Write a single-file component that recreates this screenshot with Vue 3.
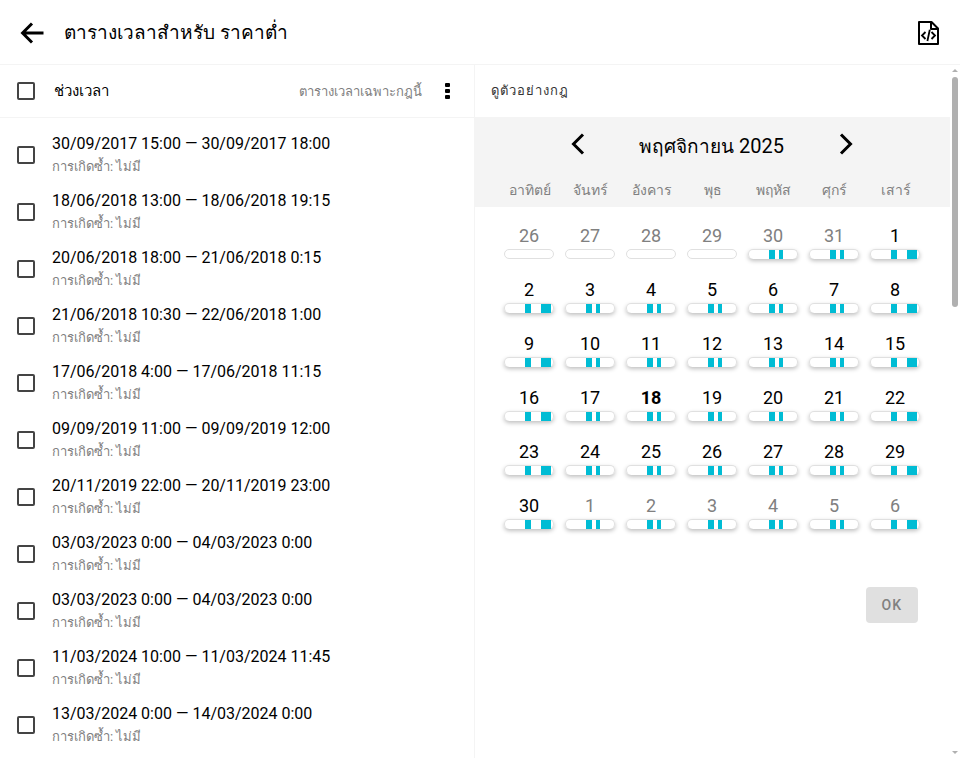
<template>
  <div class="page">
    <header class="top-bar">
      <button class="icon-button" aria-label="กลับ">
        <svg width="24" height="24" viewBox="0 0 24 24">
          <path d="M12 2.5 L2.6 12 L12 21.5 M3 12 H23.5" fill="none" stroke="#000" stroke-width="3" />
        </svg>
      </button>
      <h1>ตารางเวลาสำหรับ ราคาต่ำ</h1>
      <button class="icon-button" aria-label="JSON">
        <svg width="24" height="26" viewBox="0 0 24 26">
          <path d="M3 2 H15.5 L22 8.5 V24 H3 Z M15 2 V9 H22" fill="none" stroke="#000" stroke-width="2" stroke-linejoin="round" />
          <path d="M9.5 12 L6 15.5 L9.5 19 M15.5 12 L19 15.5 L15.5 19 M13.8 9.8 L11.4 21" fill="none" stroke="#000" stroke-width="1.8" />
        </svg>
      </button>
    </header>

    <main class="content">
      <section class="periods">
        <div class="list-header">
          <input id="select-all" v-model="allSelected" type="checkbox" />
          <label for="select-all">ช่วงเวลา</label>
          <span class="rule-note">ตารางเวลาเฉพาะกฎนี้</span>
          <button class="icon-button more" aria-label="เมนู">
            <svg width="6" height="18" viewBox="0 0 6 18">
              <rect x="1" y="1" width="5" height="4" rx="1" />
              <rect x="1" y="7" width="5" height="4" rx="1" />
              <rect x="1" y="13" width="5" height="4" rx="1" />
            </svg>
          </button>
        </div>
        <ul class="list">
          <li v-for="(period, index) in periods" :key="index">
            <input :id="'period-' + index" v-model="selected" type="checkbox" :value="index" />
            <label :for="'period-' + index">
              <span class="range">{{ period }}</span>
              <span class="repeat">การเกิดซ้ำ: ไม่มี</span>
            </label>
          </li>
        </ul>
      </section>

      <section class="preview">
        <h2>ดูตัวอย่างกฎ</h2>
        <div class="calendar-head">
          <div class="month">
            <button class="icon-button" aria-label="เดือนก่อน">
              <svg width="16" height="24" viewBox="0 0 16 24">
                <path d="M13 1.5 L3.5 11 L13 20.5" fill="none" stroke="#000" stroke-width="3" />
              </svg>
            </button>
            <span class="month-name"><span class="thai">พฤศจิกายน</span> 2025</span>
            <button class="icon-button" aria-label="เดือนถัดไป">
              <svg width="16" height="24" viewBox="0 0 16 24">
                <path d="M3 1.5 L12.5 11 L3 20.5" fill="none" stroke="#000" stroke-width="3" />
              </svg>
            </button>
          </div>
          <div class="week weekdays">
            <span v-for="name in weekdays" :key="name">{{ name }}</span>
          </div>
        </div>
        <div class="week days">
          <button
            v-for="(day, index) in days"
            :key="index"
            :class="['day', { other: day.other, today: day.today }]"
          >
            {{ day.number }}
            <span :class="['hours', { filled: day.slots.length }]">
              <span
                v-for="slot in day.slots"
                :key="slot[0]"
                class="slot"
                :style="{ left: percent(slot[0]), width: percent(slot[1] - slot[0]) }"
              ></span>
            </span>
          </button>
        </div>
        <div class="actions">
          <button class="ok" disabled>OK</button>
        </div>
      </section>

      <div class="scrollbar" aria-hidden="true">
        <span class="arrow up"></span>
        <span class="thumb"></span>
        <span class="arrow down"></span>
      </div>
    </main>
  </div>
</template>

<script setup>
import { ref, computed } from 'vue';

const periods = [
  '30/09/2017 15:00 — 30/09/2017 18:00',
  '18/06/2018 13:00 — 18/06/2018 19:15',
  '20/06/2018 18:00 — 21/06/2018 0:15',
  '21/06/2018 10:30 — 22/06/2018 1:00',
  '17/06/2018 4:00 — 17/06/2018 11:15',
  '09/09/2019 11:00 — 09/09/2019 12:00',
  '20/11/2019 22:00 — 20/11/2019 23:00',
  '03/03/2023 0:00 — 04/03/2023 0:00',
  '03/03/2023 0:00 — 04/03/2023 0:00',
  '11/03/2024 10:00 — 11/03/2024 11:45',
  '13/03/2024 0:00 — 14/03/2024 0:00'
];
const weekdays = ['อาทิตย์', 'จันทร์', 'อังคาร', 'พุธ', 'พฤหัส', 'ศุกร์', 'เสาร์'];

const selected = ref([]);
const allSelected = computed({
  get: () => selected.value.length === periods.length,
  set: value => {
    selected.value = value ? periods.map((_, i) => i) : [];
  }
});

// hours of the day, [from, to]
const weekdaySlots = [[10, 13], [15, 17]];
const weekendSlots = [[10, 13], [18, 23]];

const getSlots = (index) => {
  if (index < 4) return [];
  return index % 7 === 0 || index % 7 === 6 ? weekendSlots : weekdaySlots;
};

const numbers = [
  26, 27, 28, 29, 30, 31,
  ...Array.from({ length: 30 }, (_, i) => i + 1),
  1, 2, 3, 4, 5, 6
];
const days = numbers.map((number, index) => ({
  number,
  other: index < 6 || index > 35,
  today: index === 23,
  slots: getSlots(index)
}));

const percent = (hours) => `${(hours / 24) * 100}%`;
</script>

<style>
body {
  margin: 0;
}
</style>

<style scoped>
.page {
  display: flex;
  flex-direction: column;
  min-height: 100vh;
  background: #fff;
  color: #000;
  font-family: Roboto, sans-serif;
  font-size: 16px;
}

button {
  padding: 0;
  border: none;
  background: none;
  color: inherit;
  font-family: inherit;
  cursor: pointer;
}

.icon-button {
  display: flex;
}

.top-bar {
  display: flex;
  align-items: center;
  gap: 20px;
  height: 62px;
  padding: 2px 20px 0;
  border-bottom: 1px solid #f4f4f4;
}

h1 {
  flex: 1;
  margin: 0;
  padding-bottom: 2px;
  font-size: 19px;
  font-weight: 400;
}

.content {
  flex: 1;
  display: grid;
  grid-template-columns: 1fr 1fr 10px;
}

.periods {
  border-right: 1px solid #f4f4f4;
}

.list-header {
  display: flex;
  align-items: center;
  height: 52px;
  padding: 0 24px 0 17px;
  border-bottom: 1px solid #f4f4f4;
}

.list-header label {
  flex: 1;
  margin-left: 19px;
  font-size: 15px;
}

input[type='checkbox'] {
  appearance: none;
  flex: none;
  width: 18px;
  height: 18px;
  margin: 0;
  border: 2px solid #444;
  border-radius: 2px;
}

input[type='checkbox']:checked {
  background: #00bcd4;
}

.rule-note {
  margin-right: 22px;
  color: #808080;
  font-size: 13px;
}

.list {
  margin: 0;
  padding: 8px 0 0;
  list-style: none;
}

.list li {
  display: flex;
  align-items: center;
  height: 57px;
  padding-left: 17px;
}

.list label {
  display: flex;
  flex-direction: column;
  margin-left: 17px;
}

.range {
  line-height: 24px;
}

.repeat {
  color: #808080;
  font-size: 13px;
  line-height: 22px;
}

h2 {
  margin: 0;
  padding: 0 16px;
  color: #333;
  font-size: 13px;
  font-weight: 400;
  letter-spacing: 1px;
  line-height: 52px;
}

.calendar-head {
  height: 90px;
  background: #f4f4f4;
}

.month {
  display: flex;
  align-items: center;
  justify-content: center;
  gap: 24px;
  height: 56px;
  padding-right: 2px;
}

.month-name {
  width: 204px;
  padding-top: 2px;
  font-size: 20px;
  text-align: center;
}

.thai {
  font-size: 19px;
}

.week {
  display: grid;
  grid-template-columns: repeat(7, 61px);
  justify-content: center;
  text-align: center;
}

.weekdays {
  color: #808080;
  font-size: 14px;
  line-height: 34px;
}

.days {
  padding-top: 16px;
  padding-right: 1px;
}

.day {
  display: flex;
  flex-direction: column;
  align-items: center;
  height: 54px;
  font-size: 18px;
  line-height: 26px;
}

.other {
  color: #808080;
}

.today {
  font-weight: 700;
}

.hours {
  position: relative;
  box-sizing: border-box;
  width: 50px;
  height: 10px;
  border: 1px solid #e0e0e0;
  border-radius: 5px;
}

.filled {
  border-bottom: none;
  box-shadow: 0 2px 4px rgba(0, 0, 0, 0.25);
}

.slot {
  position: absolute;
  top: 0;
  bottom: 0;
  background: #00bcd4;
}

.actions {
  display: flex;
  justify-content: flex-end;
  padding: 40px 32px;
}

.ok {
  height: 36px;
  padding: 0 16px;
  border-radius: 4px;
  background: #e0e0e0;
  color: #808080;
  font-size: 14px;
  font-weight: 500;
  letter-spacing: 1px;
}

.scrollbar {
  display: flex;
  flex-direction: column;
  align-items: center;
  padding: 4px 0;
}

.thumb {
  width: 6px;
  height: 230px;
  margin-top: 5px;
  border-radius: 3px;
  background: #b0b0b0;
}

.arrow {
  border: 3px solid transparent;
}

.up {
  border-top: none;
  border-bottom-color: #b0b0b0;
}

.down {
  margin-top: auto;
  border-bottom: none;
  border-top-color: #b0b0b0;
}
</style>
